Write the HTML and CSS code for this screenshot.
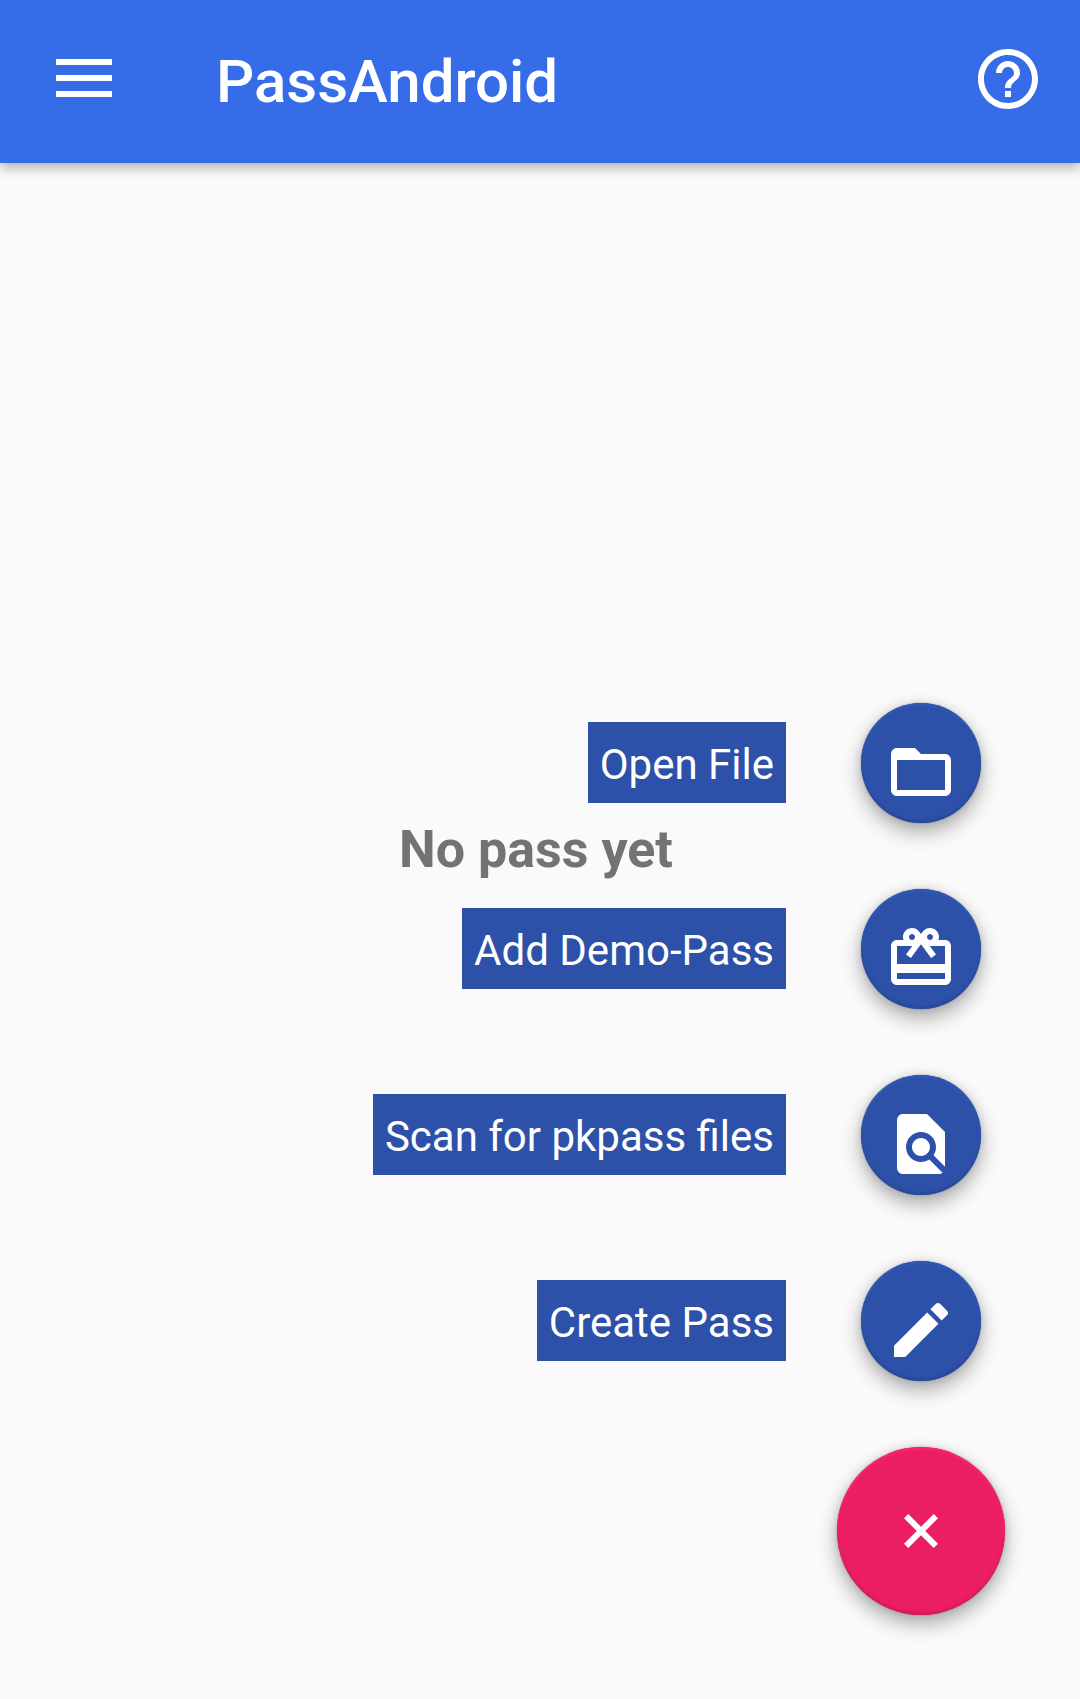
FILE: index.html
```html
<!DOCTYPE html>
<html lang="en">
<head>
<meta charset="utf-8">
<meta name="viewport" content="width=device-width, initial-scale=1">
<title>PassAndroid</title>
<link rel="stylesheet" href="styles.css">
</head>
<body class="screen">
<main class="content">
  <p class="empty-message">No pass yet</p>
</main>

<header class="toolbar">
  <button class="icon-button" type="button" aria-label="Open navigation">
    <svg class="icon" viewBox="0 0 72 72"><path d="M8 16h56v6H8zM8 32h56v6H8zM8 48h56v6H8z"/></svg>
  </button>
  <h1 class="title">PassAndroid</h1>
  <button class="icon-button" type="button" aria-label="Help">
    <svg class="icon" viewBox="0 0 24 24"><path d="M11 18h2v-2h-2v2zm1-16C6.48 2 2 6.48 2 12s4.480 10 10 10 10-4.480 10-10S17.520 2 12 2zm0 18c-4.410 0-8-3.590-8-8s3.590-8 8-8 8 3.590 8 8-3.590 8-8 8zm0-14c-2.210 0-4 1.790-4 4h2c0-1.100.9-2 2-2s2 .9 2 2c0 2-3 1.750-3 5h2c0-2.250 3-2.500 3-5 0-2.210-1.790-4-4-4z"/></svg>
  </button>
</header>

<nav class="fab-menu" aria-label="Add a pass">
  <div class="fab-row">
    <label class="fab-label" for="open-file">Open File</label>
    <button class="fab fab-small" id="open-file" type="button">
      <svg class="icon" viewBox="0 0 24 24"><path d="M20 6h-8l-2-2H4c-1.100 0-1.990.9-1.990 2L2 18c0 1.100.9 2 2 2h16c1.100 0 2-.9 2-2V8c0-1.100-.9-2-2-2zm0 12H4V8h16v10z"/></svg>
    </button>
  </div>
  <div class="fab-row">
    <label class="fab-label" for="add-demo">Add Demo-Pass</label>
    <button class="fab fab-small" id="add-demo" type="button">
      <svg class="icon" viewBox="0 0 24 24"><path d="M20 6h-2.180c.11-.31.18-.65.18-1 0-1.660-1.340-3-3-3-1.050 0-1.960.54-2.500 1.350l-.5.67-.5-.68C10.960 2.540 10.050 2 9 2 7.340 2 6 3.340 6 5c0 .35.07.69.18 1H4c-1.110 0-1.990.89-1.990 2L2 19c0 1.110.89 2 2 2h16c1.110 0 2-.89 2-2V8c0-1.110-.89-2-2-2zm-5-2c.55 0 1 .45 1 1s-.45 1-1 1-1-.45-1-1 .45-1 1-1zM9 4c.55 0 1 .45 1 1s-.45 1-1 1-1-.45-1-1 .45-1 1-1zm11 15H4v-2h16v2zm0-5H4V8h5.080L7 10.830 8.620 12 11 8.760l1-1.360 1 1.360L15.380 12 17 10.830 14.920 8H20v6z"/></svg>
    </button>
  </div>
  <div class="fab-row">
    <label class="fab-label" for="scan-files">Scan for pkpass files</label>
    <button class="fab fab-small" id="scan-files" type="button">
      <svg class="icon" viewBox="0 0 24 24"><path d="M20 19.590V8l-6-6H6c-1.100 0-1.990.9-1.990 2L4 20c0 1.100.89 2 1.990 2H18c.45 0 .85-.15 1.190-.4l-4.430-4.430c-.8.52-1.740.83-2.760.83-2.760 0-5-2.240-5-5s2.240-5 5-5 5 2.240 5 5c0 1.020-.31 1.960-.83 2.750L20 19.590zM9 13c0 1.660 1.340 3 3 3s3-1.340 3-3-1.340-3-3-3-3 1.340-3 3z"/></svg>
    </button>
  </div>
  <div class="fab-row">
    <label class="fab-label" for="create-pass">Create Pass</label>
    <button class="fab fab-small" id="create-pass" type="button">
      <svg class="icon" viewBox="0 0 24 24"><path d="M3 17.250V21h3.750L17.810 9.940l-3.750-3.750L3 17.250zM20.710 7.040c.39-.39.39-1.020 0-1.410l-2.340-2.340c-.39-.39-1.020-.39-1.410 0l-1.830 1.830 3.750 3.750 1.830-1.830z"/></svg>
    </button>
  </div>
  <button class="fab fab-main" type="button" aria-label="Close menu">
    <svg class="icon" viewBox="0 0 24 24"><path transform="rotate(45 12 12)" d="M19 13h-6v6h-2v-6H5v-2h6V5h2v6h6v2z"/></svg>
  </button>
</nav>
</body>
</html>
```
FILE: styles.css
```css
* {
  box-sizing: border-box;
}

/* The toolbar, the content and the floating menu share one grid cell. */
.screen {
  display: grid;
  min-height: 100vh;
  margin: 0;
  background: #fafafa;
  font-family: Roboto, "Liberation Sans", sans-serif;
}

.toolbar,
.content,
.fab-menu {
  grid-area: 1 / 1;
}

.toolbar {
  display: flex;
  align-items: center;
  align-self: start;
  height: 163px;
  padding: 0 36px 5px 48px;
  background: #366ce7;
  color: #fff;
  box-shadow: 0 4px 12px rgba(0, 0, 0, 0.32);
}

.title {
  flex: 1;
  margin: 0;
  padding: 6px 0 0 96px;
  font-size: 60px;
  font-weight: 500;
  line-height: 70px;
}

.icon-button {
  padding: 0;
  border: 0;
  background: none;
  color: inherit;
  cursor: pointer;
}

.icon {
  display: block;
  width: 72px;
  height: 72px;
  fill: currentColor;
}

.content {
  display: grid;
  place-items: center;
}

.empty-message {
  margin: 0;
  padding-right: 8px;
  color: #737373;
  font-size: 52px;
  font-weight: 700;
  line-height: 64px;
}

.fab-menu {
  display: flex;
  flex-direction: column;
  align-items: flex-end;
  place-self: end;
  gap: 66px;
  padding: 0 75px 84px 0;
}

.fab-row {
  display: flex;
  align-items: center;
  gap: 75px;
  padding-right: 24px;
}

.fab-label {
  margin-bottom: 1px;
  padding: 18px 12px 14px;
  background: #2d51a8;
  color: #fff;
  font-size: 42px;
  line-height: 49px;
  cursor: pointer;
}

.fab {
  display: grid;
  place-items: center;
  padding: 0;
  border: 0;
  border-radius: 50%;
  color: #fff;
  cursor: pointer;
}

.fab-small {
  width: 120px;
  height: 120px;
  padding-top: 18px;
  background: #2d51a8;
  box-shadow: 0 0 0 1px rgba(0, 0, 0, 0.08), 0 9px 20px rgba(0, 0, 0, 0.32),
    0 0 10px rgba(0, 0, 0, 0.1), inset 0 3px 2px #2f57b4,
    inset 0 -3px 2px #294a9c;
}

.fab-main {
  width: 168px;
  height: 168px;
  background: #eb1e63;
  box-shadow: 0 0 0 1px rgba(0, 0, 0, 0.08), 0 9px 20px rgba(0, 0, 0, 0.32),
    0 0 10px rgba(0, 0, 0, 0.1), inset 0 3px 2px #f8246b,
    inset 0 -3px 2px #d71b5c;
}
```
